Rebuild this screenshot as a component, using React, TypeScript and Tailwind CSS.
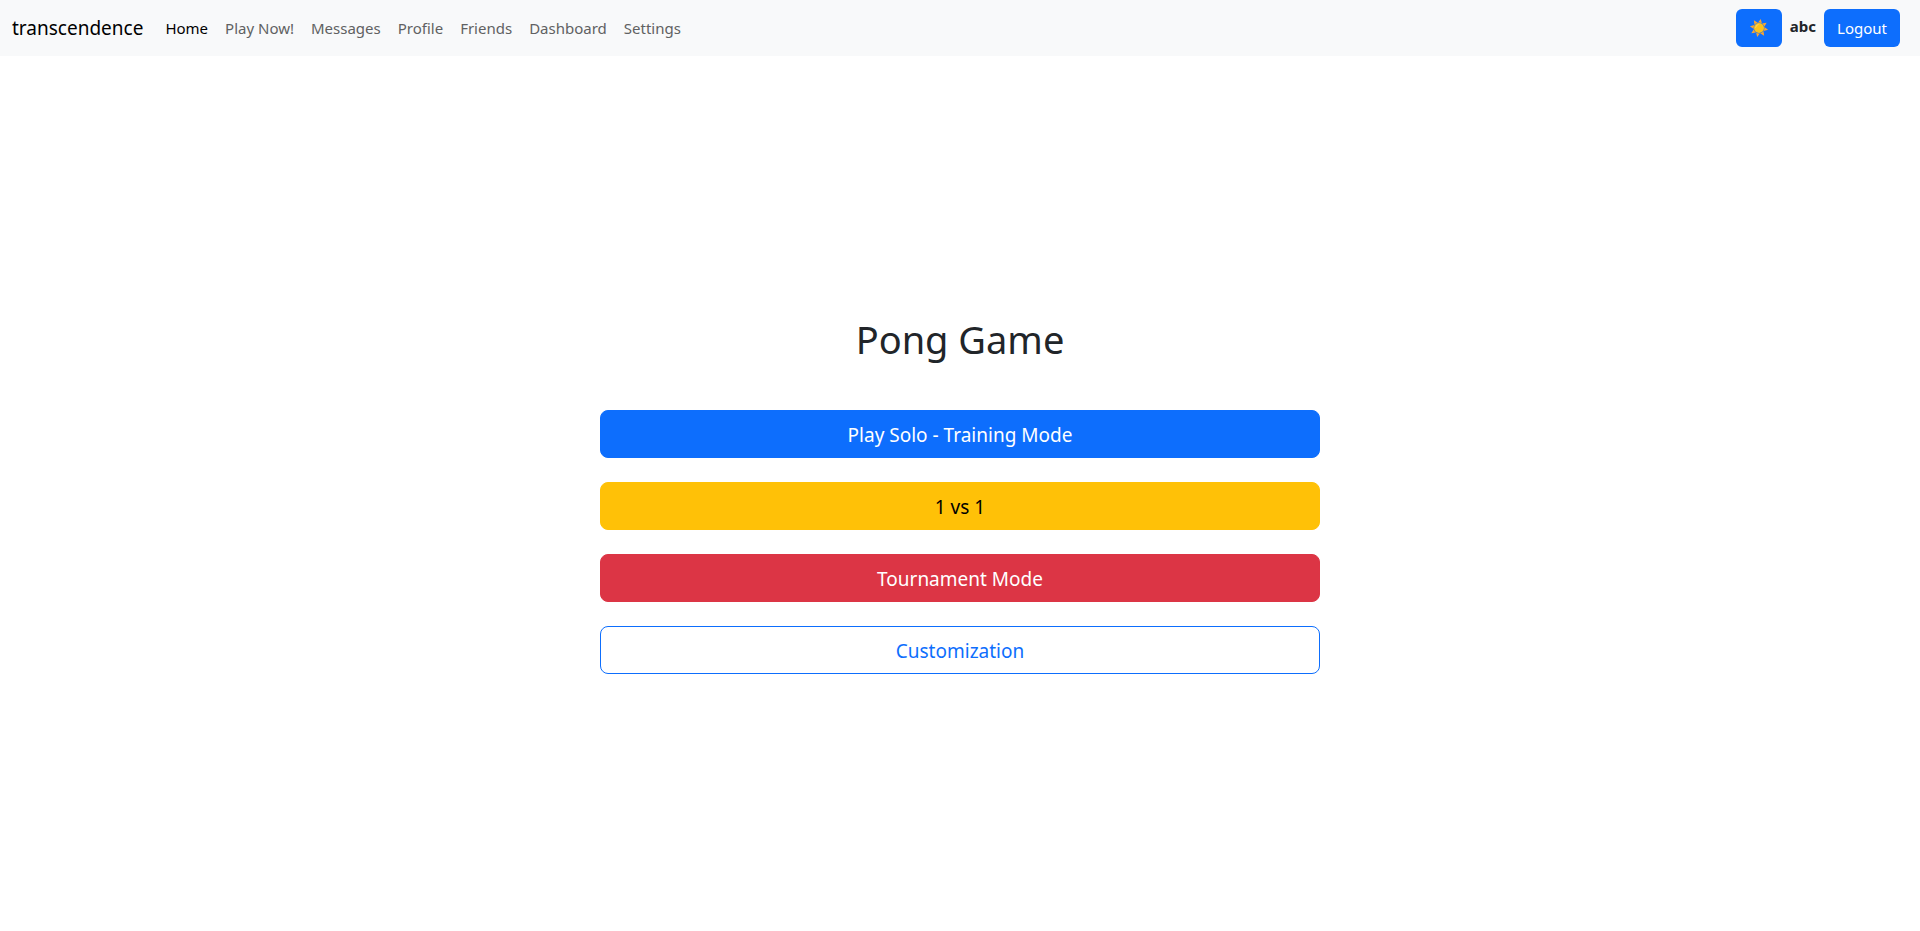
import clsx from "clsx";

const links = ["Home", "Play Now!", "Messages", "Profile", "Friends", "Dashboard", "Settings"];

const modes = [
  { label: "Play Solo - Training Mode", style: "border-[#0d6efd] bg-[#0d6efd] text-white" },
  { label: "1 vs 1", style: "border-[#ffc107] bg-[#ffc107] text-black" },
  { label: "Tournament Mode", style: "border-[#dc3545] bg-[#dc3545] text-white" },
  { label: "Customization", style: "border-[#0d6efd] bg-white text-[#0d6efd]" },
];

const rayAngles = [0, 45, 90, 135, 180, 225, 270, 315];

function SunIcon() {
  return (
    <svg viewBox="0 0 20 20" className="size-5" aria-hidden="true">
      <g transform="rotate(11 10 10)" fill="#fba62f">
        {rayAngles.map((angle) => (
          <path key={angle} d="M10 0.8 L12 5 Q10 4.1 8 5 Z" transform={`rotate(${angle} 10 10)`} />
        ))}
      </g>
      <circle cx="10" cy="10" r="5" fill="#fcc21b" />
      <path d="M6.6 9.4 Q7 7 9.2 6.5" fill="none" stroke="#fde07a" strokeWidth="0.7" strokeLinecap="round" />
    </svg>
  );
}

export default function App() {
  return (
    <div className="flex min-h-screen flex-col bg-white font-['Noto_Sans',sans-serif] text-[15px] leading-6 text-[#212529]">
      <header className="flex h-14 items-center bg-[#f8f9fa] pr-5 pl-3">
        <a href="#" className="mr-3.5 text-[19px] leading-[30px] text-black">
          transcendence
        </a>
        <nav className="flex grow gap-px">
          {links.map((label, i) => (
            <a key={label} href="#" className={clsx("p-2", i === 0 ? "text-black" : "text-[#606162]")}>
              {label}
            </a>
          ))}
        </nav>
        <div className="flex items-center gap-2">
          <button
            type="button"
            aria-label="Toggle theme"
            className="flex h-[38px] items-center rounded-md bg-[#0d6efd] px-[13px]"
          >
            <SunIcon />
          </button>
          <span className="pb-1 font-bold">abc</span>
          <button type="button" className="h-[38px] rounded-md bg-[#0d6efd] px-[13px] text-white">
            Logout
          </button>
        </div>
      </header>
      <main className="flex grow flex-col items-center justify-center px-3">
        <h1 className="mb-[46px] text-[38px] leading-[50px]">Pong Game</h1>
        <div className="flex w-full max-w-[720px] flex-col gap-6">
          {modes.map(({ label, style }) => (
            <button
              key={label}
              type="button"
              className={clsx("h-12 w-full rounded-lg border px-4 pt-0.5 text-[19px] leading-[30px]", style)}
            >
              {label}
            </button>
          ))}
        </div>
      </main>
    </div>
  );
}
